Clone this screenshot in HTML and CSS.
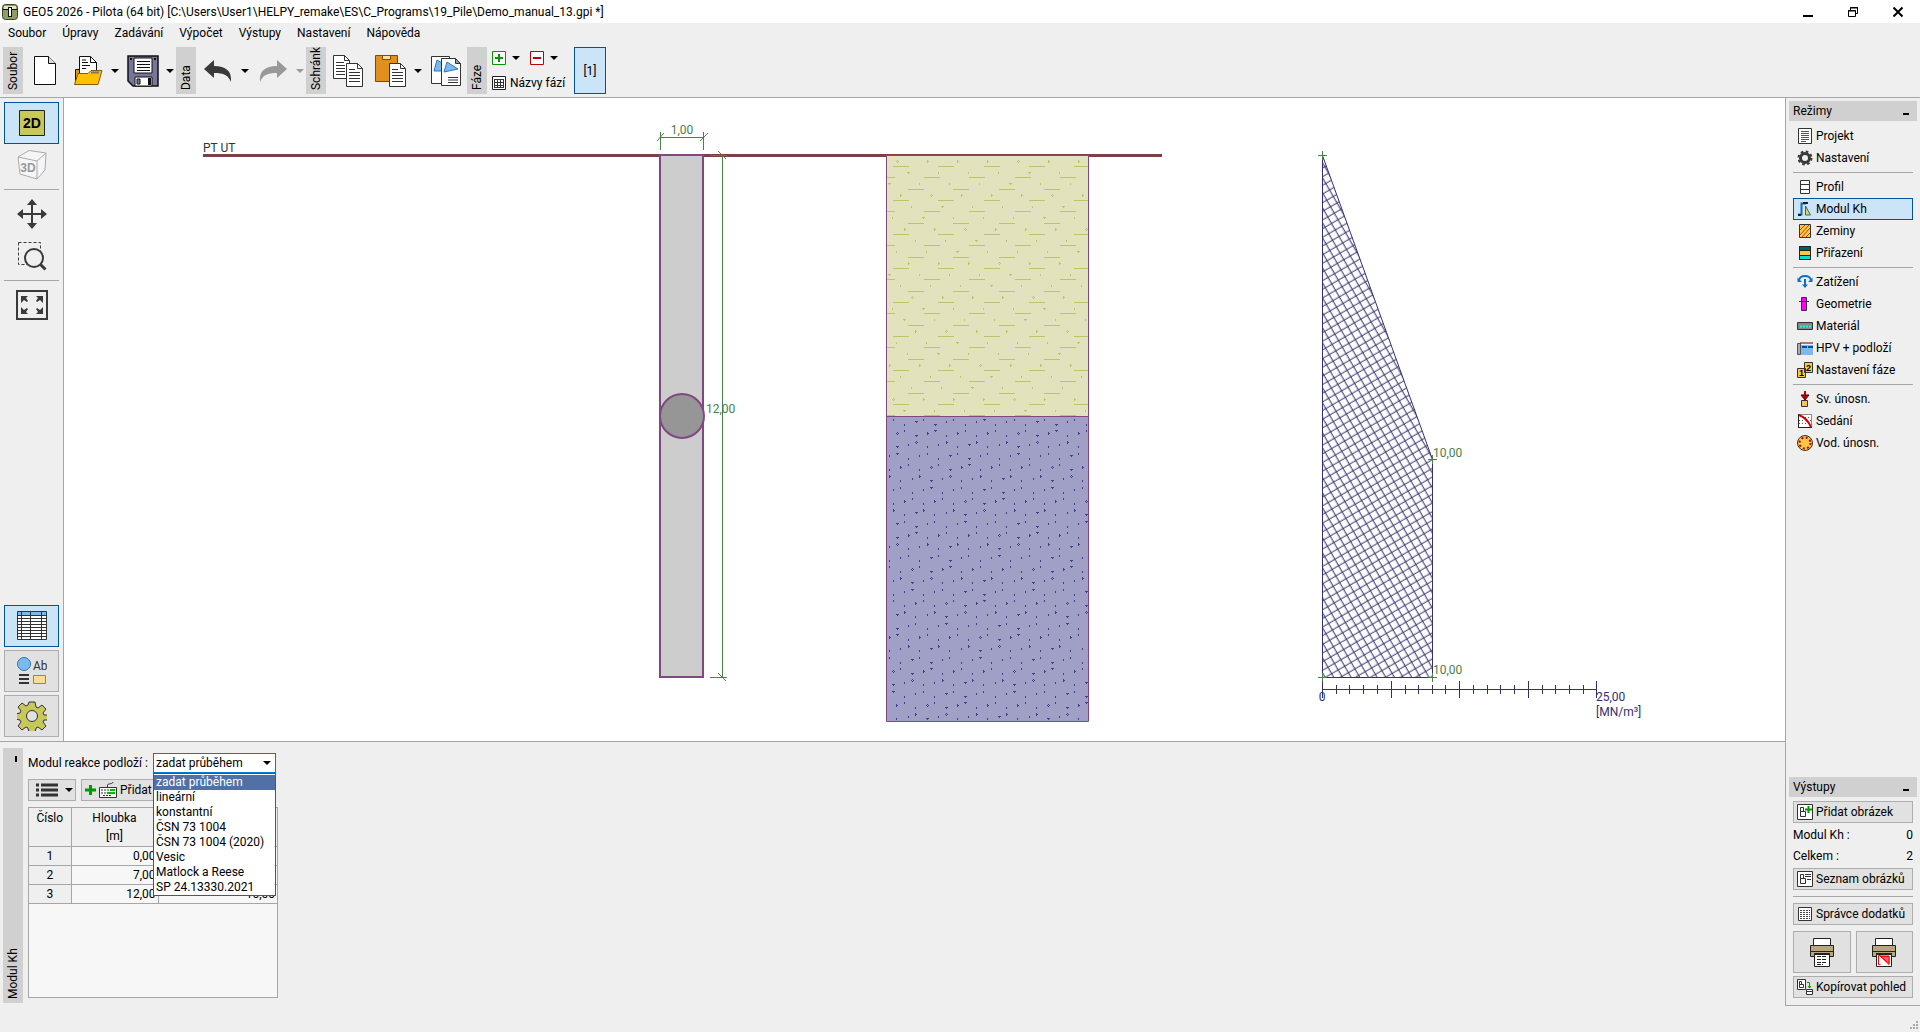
FILE: index.html
```html
<!DOCTYPE html>
<html lang="cs">
<head>
<meta charset="utf-8">
<title>GEO5 2026 - Pilota</title>
<link rel="stylesheet" href="styles.css">
</head>
<body>
<header class="titlebar">
  <svg class="app-icon" width="16" height="16" viewBox="0 0 16 16"><rect x=".5" y=".5" width="15" height="15" rx="3" fill="#8d9d63" stroke="#3a4528"/><path d="M2 2h12v4H2z" fill="#dfe5cd"/><path d="M1 5.500h14" stroke="#111"/><rect x="6.500" y="3.500" width="3" height="9" fill="#fff" stroke="#111"/></svg>
  <h1 class="title">GEO5 2026 - Pilota (64 bit) [C:\Users\User1\HELPY_remake\ES\C_Programs\19_Pile\Demo_manual_13.gpi *]</h1>
  <div class="win-buttons">
    <button class="win-btn" aria-label="Minimalizovat"><svg width="12" height="12"><path d="M1 10h10" stroke="#000" stroke-width="2"/></svg></button>
    <button class="win-btn" aria-label="Obnovit"><svg width="12" height="12" fill="none" stroke="#000"><path d="M1.500 4.500h7v6h-7zM3.500 4V1.500h7v6H9M1 5h8M3 2h8"/></svg></button>
    <button class="win-btn" aria-label="Zavřít"><svg width="12" height="12"><path d="M1.500 1.500l9 9M10.500 1.500l-9 9" stroke="#000" stroke-width="2"/></svg></button>
  </div>
</header>
<nav class="menubar">
  <button>Soubor</button><button>Úpravy</button><button>Zadávání</button><button>Výpočet</button><button>Výstupy</button><button>Nastavení</button><button>Nápověda</button>
</nav>
<div class="toolbar">
  <div class="vtab"><span>Soubor</span></div>
  <button class="tool" aria-label="Nový"><svg width="24" height="32" viewBox="0 0 24 32"><path d="M1.500 1.500h14l7 7v21h-21z" fill="#fff" stroke="#111"/><path d="M15.500 1.500v7h7" fill="#ddd" stroke="#111"/></svg></button>
  <button class="tool" aria-label="Otevřít"><svg width="30" height="32" viewBox="0 0 30 32"><path d="M2.500 29V14.500h7l2 2h14V20" fill="#e09a00" stroke="#111"/><path d="M6.500 24V1.500h11l6 6V24z" fill="#fff" stroke="#111"/><path d="M17.500 1.500v6h6M9 7.500h6M9 10.500h8M9 13.500h4M9 5h4" fill="none" stroke="#111"/><path d="M1.500 29.500L5 18.500h10l3-3h11l-4 14z" fill="#ffc000" stroke="#8a5a00"/><path d="M18 17.500h8" stroke="#777" stroke-width="2"/></svg></button>
  <button class="drop" aria-label="Naposledy otevřené"></button>
  <button class="tool" aria-label="Uložit"><svg width="32" height="32" viewBox="0 0 32 32"><path d="M1 1h30v30H6l-5-5z" fill="#77779c" stroke="#111" stroke-width="1.500"/><path d="M7 3h18v15H7z" fill="#fff" stroke="#111"/><path d="M10 6.500h13M10 9.500h13M10 12.500h13M10 15.500h13" stroke="#111"/><path d="M8 22h17v9H8z" fill="#fff" stroke="#111"/><path d="M10 24h3v5h-3z" fill="#77779c" stroke="#111"/><path d="M21 23h3v7h-3zM3 3h2v2H3zM27 3h2v2h-2z" fill="#111"/></svg></button>
  <button class="drop" aria-label="Uložit jako"></button>
  <div class="vtab"><span>Data</span></div>
  <button class="tool" aria-label="Zpět"><svg width="30" height="24" viewBox="0 0 30 24"><path d="M1 10L11 1v6c12 0 18 5 17 16-3-7-7-9-17-9v5z" fill="#3a3a3a"/></svg></button>
  <button class="drop" aria-label="Historie zpět"></button>
  <button class="tool" aria-label="Znovu"><svg width="30" height="24" viewBox="0 0 30 24"><path d="M29 10L19 1v6C7 7 1 12 2 23c3-7 7-9 17-9v5z" fill="#989898"/></svg></button>
  <button class="drop off" aria-label="Historie znovu"></button>
  <div class="vtab"><span>Schránk</span></div>
  <button class="tool" aria-label="Kopírovat"><svg width="32" height="34" viewBox="0 0 32 34"><path d="M1.500 1.500h11l5 5v18h-16z" fill="#fff" stroke="#333"/><path d="M12.500 1.500v5h5M4 8.500h8M4 11.500h9M4 14.500h9M4 17.500h9M4 20.500h9" fill="none" stroke="#333"/><path d="M14.500 9.500h11l5 5v18h-16z" fill="#fff" stroke="#333"/><path d="M25.500 9.500v5h5M17 15.500h6M17 18.500h11M17 21.500h11M17 24.500h11M17 27.500h11" fill="none" stroke="#333"/></svg></button>
  <button class="tool" aria-label="Vložit"><svg width="32" height="34" viewBox="0 0 32 34"><path d="M.5 1.500h22v26H.5z" fill="#e38f1e" stroke="#7a4a08"/><path d="M7.500 1.500h8v4h-8z" fill="#ffe0a0" stroke="#7a4a08"/><path d="M14.500 9.500h11l5 5v18h-16z" fill="#fff" stroke="#333"/><path d="M25.500 9.500v5h5M17 15.500h6M17 18.500h11M17 21.500h11M17 24.500h11M17 27.500h11" fill="none" stroke="#333"/></svg></button>
  <button class="drop" aria-label="Možnosti vložení"></button>
  <button class="tool" aria-label="Kopírovat obrázek"><svg width="32" height="32" viewBox="0 0 32 32"><path d="M1.500 1.500h18v27h-18z" fill="#fff" stroke="#333"/><path d="M4 16L7 5l5 3v8z" fill="#7db9ec" stroke="#2878c0"/><path d="M11.500 3.500h14l5 5v22h-19z" fill="#fff" stroke="#333"/><path d="M25.500 3.500v5h5z" fill="#999" stroke="#333"/><path d="M14 17l3-10 11 7z" fill="#7db9ec" stroke="#2878c0"/><path d="M18 22.500h10M18 25h10M18 27.500h10" stroke="#333"/></svg></button>
  <div class="vtab"><span>Fáze</span></div>
  <div class="phases">
    <div class="phase-row">
      <button class="mini" aria-label="Přidat fázi"><svg width="14" height="14"><path d="M.5.5h13v13H.5z" fill="#fff" stroke="#090"/><path d="M7 3v8M3 7h8" stroke="#090" stroke-width="2"/></svg></button>
      <button class="drop" aria-label="Možnosti přidání"></button>
      <button class="mini" aria-label="Odebrat fázi"><svg width="14" height="14"><path d="M.5.5h13v13H.5z" fill="#fff" stroke="#c00000"/><path d="M3 7h8" stroke="#c00000" stroke-width="2"/></svg></button>
      <button class="drop" aria-label="Možnosti odebrání"></button>
    </div>
    <button class="phase-names"><svg width="14" height="14"><path d="M.5.5h13v13H.5z" fill="#fff" stroke="#222"/><path d="M3 3.500h9M3 6.500h9M3 9.500h9M3 11.500h9M2.500 3v9M5.500 3v9M8.500 3v9M11.500 3v9" stroke="#333"/></svg>Názvy fází</button>
  </div>
  <button class="stage">[1]</button>
</div>
<main class="workspace">
  <nav class="leftbar">
    <button class="side on" aria-label="2D"><svg width="26" height="26"><path d="M.5.5h25v25H.5z" fill="#c8c85a" stroke="#222"/><text x="13" y="18" class="t2d">2D</text></svg></button>
    <button class="side flat" aria-label="3D"><svg width="30" height="30" viewBox="0 0 30 30"><path d="M1 7L20 11l9-8-17-2.500zM1 7l2 17 17 5 8-9 1-17M20 11v18" fill="#f6f6f6" stroke="#aaa"/><text x="11" y="22" class="t3d">3D</text></svg></button>
    <hr>
    <button class="side flat" aria-label="Posun"><svg width="30" height="30"><path d="M15 3v24M3 15h24" stroke="#3a3a3a" stroke-width="2"/><path d="M15 0l5 6H10zM15 30l5-6H10zM0 15l6-5v10zM30 15l-6-5v10z" fill="#3a3a3a"/></svg></button>
    <button class="side flat" aria-label="Zvětšit výřez"><svg width="30" height="30" fill="none" stroke="#3a3a3a"><path d="M1.500 1.500h22v22h-22z" stroke-dasharray="3 2"/><circle cx="17" cy="17" r="9" fill="#efefef" stroke-width="2"/><path d="M23.500 23.500l5 5" stroke-width="3"/></svg></button>
    <hr>
    <button class="side flat" aria-label="Zobrazit vše"><svg width="32" height="30"><path d="M1 1h30v28H1z" fill="#efefef" stroke="#3a3a3a" stroke-width="2"/><path d="M5 6h7l-2 2 2 3-1 1-3-2-3 3zM27 6h-7l2 2-2 3 1 1 3-2 3 3zM5 24h7l-2-2 2-3-1-1-3 2-3-3zM27 24h-7l2-2-2-3 1-1 3 2 3-3z" fill="#3a3a3a"/></svg></button>
    <div class="grow"></div>
    <button class="side on" aria-label="Tabulka"><svg width="30" height="30"><path d="M1 1h28v28H1z" fill="#fff"/><path d="M1 1h28v4H1z" fill="#7db9ec"/><path d="M.5.5h29v28H.5zM0 4.500h30M0 7.500h30M0 10.500h30M0 13.500h30M0 16.500h30M0 19.500h30M0 22.500h30M0 25.500h30M4.500 0v29M13.500 0v29M24.500 0v29" fill="none" stroke="#333"/></svg></button>
    <button class="side" aria-label="Popisy"><svg width="30" height="28"><circle cx="7" cy="7" r="6.500" fill="#7db9ec" stroke="#2878c0"/><text x="16" y="13" class="tab">Ab</text><path d="M2 18h10M2 22h10M2 26h10" stroke="#333" stroke-width="2"/><path d="M16.500 18.500h12v8h-12z" fill="#fcdc90" stroke="#e07000"/></svg></button>
    <button class="side" aria-label="Nastavení vykreslení"><svg width="30" height="30" viewBox="-15 -15 30 30"><g fill="#c8c85a" stroke="#333"><path d="M-3-14h6l1 5 2 1 4-3 4 4-3 4 1 2 4 0v5l-4 0-1 2 3 4-4 4-4-3-2 1-1 5h-6l-1-5-2-1-4 3-4-4 3-4-1-2-5-1v-5l5-1 1-2-3-4 4-4 4 3 2-1z"/><circle r="5.500" fill="#e1e1e1"/></g></svg></button>
  </nav>
  <section class="canvas">
    <svg class="drawing" viewBox="64 98 1721 643" role="img" aria-label="Pilota, profil a průběh modulu Kh">
      <defs>
        <pattern id="net" width="7.500" height="7.500" patternUnits="userSpaceOnUse" patternTransform="translate(1322 155) rotate(-30)"><path d="M0 4h8M4 0v8" class="net-line"/></pattern>
        <clipPath id="clip-top"><path d="M887 157h201v259H887z"/></clipPath>
        <clipPath id="clip-low"><path d="M887 417h201v304H887z"/></clipPath>
      </defs>
      <path class="ground" d="M203 155.500h959"/>
      <text x="203" y="152" class="dark">PT UT</text>
      <path d="M886.500 155.500h202v261h-202z" class="soil-a"/>
      <path d="M886.500 416.500h202v305h-202z" class="soil-b"/>
      <g id="soil-top" clip-path="url(#clip-top)" fill="#bcc46a"></g>
      <g id="soil-low" clip-path="url(#clip-low)" fill="#433f8b"></g>
      <path d="M660 155h43v522h-43z" class="pile"/>
      <circle cx="682" cy="416" r="22" class="section"/>
      <g class="dim">
        <path d="M660.500 132v18M703.500 132v18M660 137.500h44M710 155.500h17M710 677.500h17M722.500 155v523"/>
        <path d="M657 141l7-8M700 141l8-8M718 151l8 8M718 673l8 8"/>
      </g>
      <text x="682" y="134" class="green mid">1,00</text>
      <text x="706" y="413" class="green">12,00</text>
      <path d="M1322.500 155.500L1432.500 459.500V677.500H1322.500z" class="kh"/>
      <path d="M1318 155.500h9M1322.500 151v9M1428 459.500h9M1432.500 455v9M1318 677.500h9M1322.500 673v9M1428 677.500h9M1432.500 673v9" class="dim"/>
      <text x="1433" y="457" class="green">10,00</text>
      <text x="1433" y="674" class="green">10,00</text>
      <path class="scale" d="M1322 689.500h275M1322.500 681v17M1391.500 681v17M1459.500 681v17M1528.500 681v17M1596.500 681v17M1336.500 685v9M1349.500 685v9M1363.500 685v9M1377.500 685v9M1405.500 685v9M1418.500 685v9M1432.500 685v9M1445.500 685v9M1473.500 685v9M1487.500 685v9M1500.500 685v9M1514.500 685v9M1542.500 685v9M1555.500 685v9M1569.500 685v9M1583.500 685v9"/>
      <text x="1322" y="701" class="navy mid">0</text>
      <text x="1596" y="701" class="navy">25,00</text>
      <text x="1596" y="716" class="navy">[MN/m³]</text>
    </svg>
  </section>
  <section class="inputs">
    <div class="vtab tall"><i></i><span>Modul Kh</span></div>
    <div class="form">
      <div class="field">
        <label for="kh">Modul reakce podloží :</label>
        <div class="combo">
          <select id="kh"><option>zadat průběhem</option></select>
          <ul class="list">
            <li class="sel">zadat průběhem</li><li>lineární</li><li>konstantní</li><li>ČSN 73 1004</li><li>ČSN 73 1004 (2020)</li><li>Vesic</li><li>Matlock a Reese</li><li>SP 24.13330.2021</li>
          </ul>
        </div>
      </div>
      <div class="actions">
        <button class="btn menu-btn" aria-label="Seznam"><svg width="22" height="14"><path d="M0 2h3M0 7h3M0 12h3M5 2h17M5 7h17M5 12h17" stroke="#333" stroke-width="3"/></svg><b class="tri"></b></button>
        <button class="btn add-btn"><svg width="32" height="16" viewBox="0 0 32 16"><path d="M5.500 3v10M0 8h11" stroke="#090" stroke-width="3"/><path d="M14.500 5.500h17v10h-17zM22.500 5V3q0-1 2-1t4-2" fill="#fff" stroke="#333"/><path d="M16 8h8M16 11h5M18 13.500h9" stroke="#333" stroke-dasharray="2 1"/><path d="M25 8h5M22 11h8" stroke="#0b0" stroke-width="2"/></svg>Přidat</button>
      </div>
      <div class="grid-box">
        <table>
          <colgroup><col class="c1"><col class="c2"><col></colgroup>
          <thead><tr><th>Číslo</th><th>Hloubka<br>[m]</th><th></th></tr></thead>
          <tbody>
            <tr><th>1</th><td>0,00</td><td></td></tr>
            <tr><th>2</th><td>7,00</td><td></td></tr>
            <tr><th>3</th><td>12,00</td><td>10,00</td></tr>
          </tbody>
        </table>
      </div>
    </div>
  </section>
  <aside class="rightbar">
    <h2>Režimy<i></i></h2>
    <div class="modes">
      <button><svg width="16" height="16"><path d="M1.500.5h13v15h-13z" fill="#fff" stroke="#333"/><path d="M4 3.500h8M4 5.500h8M4 7.500h8M4 9.500h8M4 11.500h8M4 13.500h5" stroke="#555"/></svg>Projekt</button>
      <button><svg width="16" height="16" viewBox="-8 -8 16 16"><circle r="4.500" fill="none" stroke="#3a3a3a" stroke-width="3"/><circle r="6.500" fill="none" stroke="#3a3a3a" stroke-width="2" stroke-dasharray="2.600 2.500"/></svg>Nastavení</button>
      <hr>
      <button><svg width="16" height="16"><path d="M3.500 1.500h9v13h-9zM3 5.500h10M3 10.500h10" fill="#fff" stroke="#333"/></svg>Profil</button>
      <button class="on"><svg width="16" height="16"><path d="M1 13.500h3.500v-11H9" fill="none" stroke="#1070c0" stroke-width="2"/><path d="M1 14h3M6 2h5" stroke="#222" stroke-width="2"/><path d="M8.500 5v9h5z" fill="#ffc840" stroke="#1070c0"/></svg>Modul Kh</button>
      <button><svg width="16" height="16"><path d="M2.500 1.500h11v13h-11z" fill="#ffc840" stroke="#333"/><path d="M3 7l5-5M3 12l9-10M5 14l8-9M9 14l4-4" stroke="#a05000"/></svg>Zeminy</button>
      <button><svg width="16" height="16"><path d="M2.500 1.500h11v13h-11z" fill="#ffc840" stroke="#222"/><path d="M3 2h10v4H3z" fill="#006060"/><path d="M3 11h10v3H3z" fill="#00e0d8"/><path d="M2.500 1.500h11v13h-11zM3 5.500h10M3 10.500h10" fill="none" stroke="#222"/></svg>Přiřazení</button>
      <hr>
      <button><svg width="16" height="16" fill="none" stroke="#1070c0"><path d="M2 6q1-4 6-4t6 4M8 5v8" stroke-width="2"/><path d="M5 10.500h6L8 14zM.5 3.500V8H5zM15.500 3.500V8H11z" fill="#1070c0" stroke="none"/></svg>Zatížení</button>
      <button><svg width="16" height="16"><path d="M4.500 1.500h5v13h-5z" fill="#f0f" stroke="#333"/><path d="M2 5.500h10" stroke="#333"/></svg>Geometrie</button>
      <button><svg width="16" height="16"><path d="M.5 4.500h15v7H.5z" fill="#888" stroke="#333"/><path d="M3 8.500h11" stroke="#0ff" stroke-width="2" stroke-dasharray="2 1"/></svg>Materiál</button>
      <button><svg width="16" height="16"><path d="M4 5h12v10H4z" fill="#7db9ec"/><path d="M.5 3.500h3v11h-3z" fill="#aaa" stroke="#555"/><path d="M3 3h13" stroke="#600" stroke-width="1"/><path d="M5 7h11" stroke="#0050a0" stroke-width="2" stroke-dasharray="5 1"/></svg>HPV + podloží</button>
      <button><svg width="16" height="16" class="digits"><path d="M.5 6.500h8v9h-8zM7.500.5h8v10h-8z" fill="#ffc840" stroke="#333"/><text x="2" y="14">1</text><text x="9" y="9">2</text></svg>Nastavení fáze</button>
      <hr>
      <button><svg width="16" height="16"><path d="M8 0v5" stroke="#c00000" stroke-width="2"/><path d="M4 4h8L8 9z" fill="#c00000" stroke="#400"/><path d="M4.500 9.500h6v6h-6z" fill="#ffc840" stroke="#333"/></svg>Sv. únosn.</button>
      <button><svg width="16" height="16"><path d="M1.500 1.500h13v13h-13z" fill="#fff" stroke="#222" stroke-dasharray="1 1"/><path d="M8 4.500h6M10 7.500h4M2 10.500h7M2 7.500h5" stroke="#555" stroke-dasharray="1 2"/><path d="M1.500 1v14M1 14.500h14" stroke="#222"/><path d="M2 2q8 3 12 12" fill="none" stroke="#d00000" stroke-width="2"/></svg>Sedání</button>
      <button><svg width="16" height="16" viewBox="-8 -8 16 16"><circle r="7.500" fill="#ffc840" stroke="#333"/><circle r="5.500" fill="none" stroke="#c00000" stroke-width="2" stroke-dasharray="2 2.320"/></svg>Vod. únosn.</button>
    </div>
    <div class="grow"></div>
    <h2>Výstupy<i></i></h2>
    <div class="outputs">
      <button class="btn"><svg width="16" height="16"><path d="M.5.5h15v15H.5z" fill="#fff" stroke="#333"/><path d="M3.500 3.500h3v4h-3zM3.500 7.500h5v5h-5z" fill="none" stroke="#333"/><path d="M11.500 2v7M8 5.500h7" stroke="#090" stroke-width="2"/></svg>Přidat obrázek</button>
      <p><span>Modul Kh :</span><span>0</span></p>
      <p><span>Celkem :</span><span>2</span></p>
      <button class="btn"><svg width="16" height="16"><path d="M.5.5h15v15H.5z" fill="#fff" stroke="#333"/><path d="M3.500 3.500h3v4h-3zM3.500 7.500h5v5h-5zM8 3.500h6M8 5.500h6M10 8.500h4" fill="none" stroke="#333"/></svg>Seznam obrázků</button>
      <hr>
      <button class="btn"><svg width="16" height="16"><path d="M1.500 1.500h13v13h-13z" fill="#fff" stroke="#333"/><path d="M3 4.500h10M3 6.500h10M3 8.500h10M3 10.500h10M3 12.500h10" stroke="#444" stroke-dasharray="2 1"/></svg>Správce dodatků</button>
      <div class="pair">
        <button class="btn" aria-label="Tisk"><svg width="24" height="30"><path d="M3.500 1.500h17v8h-17z" fill="#fff" stroke="#222"/><path d="M.5 8.500h23v11H.5z" fill="#b8a67c" stroke="#222"/><path d="M1 14.500h22" stroke="#222"/><path d="M4 17h16" stroke="#222" stroke-width="2"/><path d="M4.500 17.500h15v12h-15z" fill="#fff" stroke="#222"/><path d="M7 19.500h10M7 22.500h10M7 25.500h10M7 27.500h6" stroke="#222" stroke-dasharray="4 1"/></svg></button>
        <button class="btn" aria-label="Tisk pohledu"><svg width="24" height="30"><path d="M3.500 1.500h17v8h-17z" fill="#fff" stroke="#222"/><path d="M.5 8.500h23v11H.5z" fill="#b8a67c" stroke="#222"/><path d="M1 14.500h22" stroke="#222"/><path d="M4 17h16" stroke="#222" stroke-width="2"/><path d="M4.500 17.500h15v12h-15z" fill="#fff" stroke="#222"/><path d="M8.500 18.500h-2v9h2M8 19l9 8.500v-8.500z" fill="none" stroke="red"/><path d="M9 19.500h8v7z" fill="#f66" stroke="red"/></svg></button>
      </div>
      <button class="btn"><svg width="16" height="16"><path d="M.5.5h8v10h-8z" fill="#fff" stroke="#333"/><path d="M2.500 2.500h2v3h-2zM2.500 5.500h4v3h-4z" fill="none" stroke="#333"/><path d="M10 3.500h2.500v5M11 7l1.500 2L14 7" fill="none" stroke="#090"/><path d="M9.500 10.500h6v5h-6zM10 12.500h5" fill="#fff" stroke="#333"/></svg>Kopírovat pohled</button>
    </div>
  </aside>
</main>
<footer class="status"><svg width="9" height="9"><path d="M7 1h2M4 4h2M7 4h2M1 7h2M4 7h2M7 7h2" stroke="#aaa" stroke-width="2"/></svg></footer>
<script src="soils.js"></script>
</body>
</html>
```
FILE: styles.css
```css
* { box-sizing: border-box; }
body {
  margin: 0;
  min-height: 100vh;
  display: flex;
  flex-direction: column;
  background: #efefef;
  color: #000;
  font: 12px/16px Roboto, "Open Sans", sans-serif;
}
button {
  font: inherit;
  color: inherit;
  background: none;
  border: 0;
  padding: 0;
  margin: 0;
}
svg { display: block; flex: none; }
hr { height: 1px; border: 0; background: #a6a6a6; margin: 3px 0; width: 100%; }
.grow { flex: 1; }

.titlebar { display: flex; align-items: center; height: 23px; background: #fff; padding-left: 2px; gap: 5px; }
.title { flex: 1; margin: 0; font-size: 12px; font-weight: 400; }
.win-buttons { display: flex; }
.win-btn { width: 45px; height: 23px; display: grid; place-items: center; }

.menubar { display: flex; height: 21px; padding-bottom: 2px; }
.menubar button { padding: 0 8px; }

.toolbar { display: flex; height: 54px; padding: 3px 0 3px 3px; border-bottom: 1px solid #a6a6a6; }
.vtab {
  width: 20px;
  background: #d0d0d0;
  writing-mode: vertical-rl;
  transform: rotate(180deg);
  display: flex;
  align-items: center;
  padding-top: 4px;
}
.tool { width: 43px; display: grid; place-items: center; }
.drop { width: 12px; display: grid; place-items: center; }
.drop::before, .tri, .combo::after {
  content: "";
  border: 4px solid transparent;
  border-top-color: #000;
  border-bottom: 0;
}
.drop.off::before { border-top-color: #999; }
.phases { width: 87px; padding: 4px 5px; display: flex; flex-direction: column; justify-content: space-between; }
.phase-row { display: flex; }
.phase-row .drop { margin: 0 8px 0 4px; }
.phase-names { display: flex; align-items: center; gap: 4px; height: 14px; white-space: nowrap; }
.stage { width: 32px; border: 1px solid #00539c; background: #cce4f7; }

.workspace {
  flex: 1;
  display: grid;
  grid-template-columns: 64px minmax(0, 1fr) 135px;
  grid-template-rows: minmax(500px, 1fr) 265px;
}
.leftbar { display: flex; flex-direction: column; align-items: center; padding: 4px; border-right: 1px solid #a6a6a6; }
.side { width: 55px; height: 42px; display: grid; place-items: center; background: #e1e1e1; border: 1px solid #adadad; }
.side + .side { margin-top: 3px; }
.side.flat { background: none; border: 0; margin-top: 0; }
.side.on { background: #cce4f7; border-color: #00539c; }
.t2d { font: bold 14px "Liberation Sans", sans-serif; text-anchor: middle; }
.t3d { font: bold 12px "Liberation Sans", sans-serif; text-anchor: middle; fill: #999; }
.tab { font-size: 12px; fill: #333; }

.canvas { background: #fff; min-height: 0; min-width: 0; }
.drawing { width: 100%; height: 100%; font-size: 12px; }
.ground { stroke: #7b4144; stroke-width: 3; }
.soil-a { fill: #e2e2bc; stroke: #804880; }
.soil-b { fill: #a09fc6; stroke: #804880; }
.pile { fill: #cdcdcd; stroke: #804880; stroke-width: 2; }
.section { fill: #969696; stroke: #804880; stroke-width: 2; }
.dim { stroke: #4a804a; fill: none; }
.kh { fill: url(#net); stroke: #343070; }
.net-line { stroke: #343070; }
.scale { stroke: #343070; }
.dark { fill: #333; }
.green { fill: #4a804a; }
.navy { fill: #343070; }
.mid { text-anchor: middle; }

.inputs { grid-column: 1 / 3; border-top: 1px solid #a6a6a6; display: flex; padding: 6px 0 3px 3px; gap: 5px; }
.vtab.tall { justify-content: space-between; padding-bottom: 8px; flex-direction: row-reverse; }
.vtab.tall i { width: 2px; height: 6px; margin-right: 6px; background: #000; }
.form { width: 250px; padding: 5px 0; display: flex; flex-direction: column; }
.field { display: flex; align-items: center; justify-content: space-between; }
.combo { position: relative; width: 123px; margin-right: 2px; }
.combo select {
  display: block;
  appearance: none;
  width: 100%;
  height: 20px;
  border: 1px solid #0078d7;
  border-radius: 0;
  background: #fff;
  padding: 0 2px;
  font: inherit;
  color: #000;
}
.combo::after { position: absolute; right: 5px; top: 8px; }
.list {
  position: absolute;
  top: 20px;
  left: 0;
  width: 100%;
  margin: 0;
  padding: 1px 0 0;
  list-style: none;
  background: #fff;
  border: 1px solid #555;
  line-height: 15px;
  white-space: nowrap;
}
.list li { padding-left: 2px; }
.list .sel { background: #5070a6; color: #fff; }
.actions { display: flex; gap: 5px; margin: 6px 0; }
.btn { display: flex; align-items: center; height: 22px; background: #e1e1e1; border: 1px solid #adadad; gap: 3px; padding: 0 3px; white-space: nowrap; }
.menu-btn { width: 48px; padding: 0 2px 0 7px; justify-content: space-between; }
.add-btn { width: 88px; }
.grid-box { flex: 1; border: 1px solid #a6a6a6; background: #f7f7f7; }
table { width: 100%; table-layout: fixed; border-collapse: collapse; }
.c1 { width: 42px; }
.c2 { width: 87px; }
th, td { border: 1px solid #a6a6a6; border-top: 0; border-left: 0; padding: 1px 2px 0; height: 19px; line-height: 17px; font-weight: 400; }
th { background: #efefef; vertical-align: top; }
th:last-child, td:last-child { border-right: 0; }
thead th { height: 38px; line-height: 18px; padding: 1px 0 0; }
td { text-align: right; }

.rightbar { grid-column: 3; grid-row: 1 / 3; border-left: 1px solid #a6a6a6; border-bottom: 1px solid #a6a6a6; padding: 3px; display: flex; flex-direction: column; }
.rightbar h2 { height: 20px; margin: 0; padding: 0 8px 0 4px; font-size: 12px; font-weight: 400; background: #d0d0d0; display: flex; align-items: center; justify-content: space-between; }
.rightbar h2 i { width: 6px; height: 2px; background: #000; margin-top: 6px; }
.modes, .outputs { padding: 4px; display: flex; flex-direction: column; }
.modes button { display: flex; align-items: center; height: 22px; padding: 0 3px; gap: 3px; border: 1px solid transparent; white-space: nowrap; }
.modes .on { background: #cce4f7; border-color: #00539c; }
.digits text { font: bold 9px "Liberation Sans", sans-serif; }
.outputs p { display: flex; justify-content: space-between; margin: 4px 0 1px; }
.outputs p + .btn { margin-top: 3px; }
.outputs hr { margin: 6px 0; }
.pair { display: flex; gap: 5px; margin: 6px 0 3px; }
.pair .btn { flex: 1; height: 42px; justify-content: center; }
.status { height: 26px; display: flex; justify-content: flex-end; align-items: flex-end; padding: 2px; }
```
FILE: soils.js
```javascript
const STEP = 30.25, SHIFT = 3.75, ROW = 34;
const shapes = {
  dot: 'v2h1v-2z',
  tee: 'm-1 0h3v1h-1v1h-1v-1h-1z',
  arrow: 'm0 -1h1v1h1v1h-1v1h-1z',
  ring: 'm0 -1h1v1h-1zm-1 1h1v1h-1zm2 0h1v1h-1zm-1 1h1v1h-1z'
};
function marks(list, bottom) {
  let d = '';
  for (const [x0, y0, big] of list) {
    for (let j = 0; y0 + j * ROW < bottom; j++) {
      for (let i = -12; i < 12; i++) {
        const x = x0 + i * STEP + j * SHIFT;
        if (x < 884 || x > 1090) continue;
        const whole = x === Math.floor(x);
        const kind = big ? (whole ? 'ring' : 'arrow') : (whole ? 'tee' : 'dot');
        d += `M${Math.floor(x)} ${y0 + j * ROW}${shapes[kind]}`;
      }
    }
  }
  return d;
}
function dashes() {
  let d = '';
  for (const [x0, y0] of [[893, 166], [924, 177], [908, 189]])
    for (let y = y0; y < 416; y += ROW)
      for (let i = -2; i < 6; i++) d += `M${Math.round(x0 + i * 136 / 3)} ${y}h16v1h-16z`;
  return d;
}
function draw(id, d) {
  const p = document.createElementNS('http://www.w3.org/2000/svg', 'path');
  p.setAttribute('d', d);
  document.getElementById(id).append(p);
}
draw('soil-top', dashes() + marks([[897, 161, 1], [908, 172, 0], [919.25, 183, 0]], 416));
draw('soil-low', marks([[893.25, 419, 0], [916, 421, 0], [904.75, 424, 0], [904.75, 430, 0], [897, 433, 1],
  [916, 435, 0], [916, 442, 1], [908.5, 444, 0], [897, 446, 0]], 721));
```
